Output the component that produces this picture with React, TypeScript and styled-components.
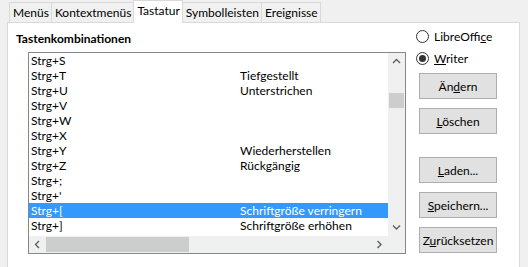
import styled, { createGlobalStyle } from "styled-components";

const GlobalStyle = createGlobalStyle`
  html, body {
    margin: 0;
    padding: 0;
    background: #f0f0f0;
    font-family: Lato, "Noto Sans", sans-serif;
    font-size: 12px;
    color: #000;
  }
`;

const rows: { key: string; label: string }[] = [
  { key: "Strg+S", label: "" },
  { key: "Strg+T", label: "Tiefgestellt" },
  { key: "Strg+U", label: "Unterstrichen" },
  { key: "Strg+V", label: "" },
  { key: "Strg+W", label: "" },
  { key: "Strg+X", label: "" },
  { key: "Strg+Y", label: "Wiederherstellen" },
  { key: "Strg+Z", label: "Rückgängig" },
  { key: "Strg+;", label: "" },
  { key: "Strg+'", label: "" },
  { key: "Strg+[", label: "Schriftgröße verringern" },
  { key: "Strg+]", label: "Schriftgröße erhöhen" },
  { key: "Strg+\\", label: "" },
];

const SELECTED = 10;

const Chevron = ({ dir }: { dir: "up" | "down" | "left" | "right" }) => {
  const paths = {
    up: "M1 5 L4.5 1.5 L8 5",
    down: "M1 1.5 L4.5 5 L8 1.5",
    left: "M5 1 L1.5 4.5 L5 8",
    right: "M1.5 1 L5 4.5 L1.5 8",
  };
  const vertical = dir === "up" || dir === "down";
  return (
    <svg width={vertical ? 9 : 7} height={vertical ? 7 : 9} viewBox={vertical ? "0 0 9 7" : "0 0 7 9"}>
      <path d={paths[dir]} fill="none" stroke="#606060" strokeWidth="1.4" />
    </svg>
  );
};

export default function App() {
  return (
    <Dialog>
      <GlobalStyle />
      <TabBar>
        <Tab>Menüs</Tab>
        <Tab>Kontextmenüs</Tab>
        <Tab $active>Tastatur</Tab>
        <Tab>Symbolleisten</Tab>
        <Tab>Ereignisse</Tab>
      </TabBar>
      <Page>
        <LeftColumn>
          <Heading>Tastenkombinationen</Heading>
          <ListBox>
            <ListBody>
              {rows.map((r, i) => (
                <Row key={r.key} $selected={i === SELECTED}>
                  <span>{r.key}</span>
                  <span>{r.label}</span>
                </Row>
              ))}
            </ListBody>
            <VScroll>
              <Arrow>
                <Chevron dir="up" />
              </Arrow>
              <VTrack>
                <VThumb />
              </VTrack>
              <Arrow>
                <Chevron dir="down" />
              </Arrow>
            </VScroll>
            <HScroll>
              <Arrow>
                <Chevron dir="left" />
              </Arrow>
              <HTrack>
                <HThumb />
              </HTrack>
              <Arrow>
                <Chevron dir="right" />
              </Arrow>
            </HScroll>
            <Corner />
          </ListBox>
        </LeftColumn>
        <RightColumn>
          <RadioRow>
            <Radio />
            <span>
              LibreOffi<u>c</u>e
            </span>
          </RadioRow>
          <RadioRow>
            <Radio $checked />
            <span>
              <u>W</u>riter
            </span>
          </RadioRow>
          <ButtonGroup>
            <Button>
              Än<u>d</u>ern
            </Button>
            <Button>
              <u>L</u>öschen
            </Button>
          </ButtonGroup>
          <ButtonGroup $spaced>
            <Button>
              <u>L</u>aden...
            </Button>
            <Button>
              <u>S</u>peichern...
            </Button>
            <Button>
              Z<u>u</u>rücksetzen
            </Button>
          </ButtonGroup>
        </RightColumn>
      </Page>
    </Dialog>
  );
}

const Dialog = styled.div`
  width: 528px;
  height: 267px;
  overflow: hidden;
  background: #f0f0f0;
`;

const TabBar = styled.div`
  display: flex;
  align-items: flex-end;
  height: 22px;
  padding-left: 10px;
  position: relative;
  z-index: 1;
`;

const Tab = styled.div<{ $active?: boolean }>`
  box-sizing: border-box;
  height: ${(p) => (p.$active ? "23px" : "20px")};
  line-height: ${(p) => (p.$active ? "20px" : "19px")};
  margin-bottom: ${(p) => (p.$active ? "-1px" : "0")};
  padding: 0 2px 0 3px;
  margin-left: -1px;
  border: 1px solid #d9d9d9;
  border-bottom: none;
  background: ${(p) => (p.$active ? "#fff" : "#f0f0f0")};
  white-space: nowrap;
`;

const Page = styled.div`
  display: flex;
  margin-left: 7px;
  width: 513px;
  height: 250px;
  box-sizing: border-box;
  background: #fff;
  border: 1px solid #d9d9d9;
  border-bottom: none;
`;

const LeftColumn = styled.div`
  display: flex;
  flex-direction: column;
  padding: 8px 0 0 8px;
`;

const Heading = styled.div`
  font-weight: bold;
  line-height: 15px;
  margin-bottom: 6px;
`;

const ListBox = styled.div`
  margin-left: 12px;
  width: 378px;
  height: 202px;
  box-sizing: border-box;
  border: 1px solid #828790;
  display: grid;
  grid-template-columns: 1fr 17px;
  grid-template-rows: 1fr 17px;
`;

const ListBody = styled.div`
  overflow: hidden;
`;

const Row = styled.div<{ $selected?: boolean }>`
  display: grid;
  grid-template-columns: 209px 1fr;
  height: 15px;
  line-height: 15px;
  padding-left: 2px;
  white-space: nowrap;
  background: ${(p) => (p.$selected ? "#3399ff" : "transparent")};
  color: ${(p) => (p.$selected ? "#fff" : "#000")};
`;

const VScroll = styled.div`
  display: flex;
  flex-direction: column;
  background: #f0f0f0;
`;

const HScroll = styled.div`
  display: flex;
  background: #f0f0f0;
`;

const Corner = styled.div`
  background: #f0f0f0;
`;

const Arrow = styled.div`
  flex: 0 0 17px;
  display: flex;
  align-items: center;
  justify-content: center;
`;

const VTrack = styled.div`
  flex: 1;
  padding-top: 23px;
  display: flex;
  flex-direction: column;
`;

const VThumb = styled.div`
  width: 15px;
  margin-left: 1px;
  height: 15px;
  background: #cdcdcd;
`;

const HTrack = styled.div`
  flex: 1;
  display: flex;
  align-items: center;
`;

const HThumb = styled.div`
  height: 15px;
  width: 143px;
  background: #cdcdcd;
`;

const RightColumn = styled.div`
  display: flex;
  flex-direction: column;
  padding: 2px 0 0 10px;
`;

const RadioRow = styled.label`
  display: flex;
  align-items: center;
  gap: 5px;
  height: 22px;
`;

const Radio = styled.span<{ $checked?: boolean }>`
  width: 13px;
  height: 13px;
  box-sizing: border-box;
  border: 1px solid #333;
  border-radius: 50%;
  background: #fff;
  display: flex;
  align-items: center;
  justify-content: center;

  &::after {
    content: "";
    width: 7px;
    height: 7px;
    border-radius: 50%;
    background: ${(p) => (p.$checked ? "#333" : "transparent")};
  }
`;

const ButtonGroup = styled.div<{ $spaced?: boolean }>`
  display: flex;
  flex-direction: column;
  gap: 9px;
  margin-top: ${(p) => (p.$spaced ? "23px" : "4px")};
  margin-left: 3px;
`;

const Button = styled.button`
  width: 78px;
  height: 26px;
  box-sizing: border-box;
  border: 1px solid #adadad;
  background: #e1e1e1;
  font-family: inherit;
  font-size: 12px;
  color: #000;
  padding: 0;
`;
